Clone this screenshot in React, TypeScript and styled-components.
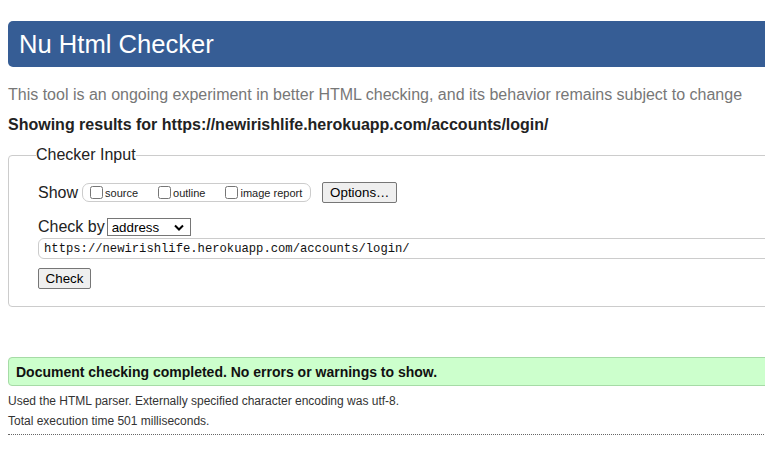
import React from "react";
import styled, { createGlobalStyle } from "styled-components";

const GlobalStyle = createGlobalStyle`
  html, body {
    margin: 0;
    padding: 0;
    background: #fff;
    overflow: hidden;
  }
  body {
    font-family: "Liberation Sans", Arial, sans-serif;
    color: #222;
  }
`;

const Page = styled.div`
  width: 900px;
  padding: 21px 0 0 8px;
  box-sizing: border-box;
`;

const Header = styled.h1`
  margin: 0;
  height: 46px;
  padding-left: 11px;
  background: #365d95;
  color: #fff;
  font-size: 25.6px;
  font-weight: 400;
  line-height: 46px;
  border-radius: 5px;
`;

const Intro = styled.p`
  margin: 19px 0 0;
  font-size: 16px;
  line-height: 18px;
  color: #777;
`;

const Results = styled.p`
  margin: 12px 0 0;
  font-size: 16px;
  line-height: 18px;
  font-weight: 700;
  color: #222;
`;

const Fieldset = styled.fieldset`
  margin: 12px 0 0;
  padding: 18px 0 17px 29px;
  border: 1px solid #ccc;
  border-radius: 4px;
  min-width: 0;
`;

const Legend = styled.legend`
  margin-left: -2px;
  padding: 0;
  font-size: 16px;
  line-height: 18px;
  color: #222;
`;

const Row = styled.div<{ $gap?: number }>`
  display: flex;
  align-items: center;
  margin-top: ${({ $gap }) => $gap ?? 0}px;
`;

const Label = styled.span`
  font-size: 16px;
  line-height: 20px;
  color: #222;
  margin-right: 4px;
`;

const OptionGroup = styled.div`
  display: flex;
  align-items: center;
  gap: 20px;
  height: 19px;
  padding: 0 8px 0 7px;
  border: 1px solid #ccc;
  border-radius: 7px;
  box-sizing: border-box;
`;

const CheckItem = styled.label`
  display: flex;
  align-items: center;
  font-size: 11px;
  color: #222;
`;

const Box = styled.input`
  width: 13px;
  height: 13px;
  margin: 0 2px 0 0;
`;

const Button = styled.button<{ $width: number }>`
  width: ${({ $width }) => $width}px;
  height: 21px;
  padding: 0;
  font-family: "Liberation Sans", Arial, sans-serif;
  font-size: 13.33px;
  color: #000;
  background: #efefef;
  border: 1px solid #767676;
  border-radius: 2px;
  box-sizing: border-box;
`;

const Select = styled.select`
  appearance: none;
  -webkit-appearance: none;
  width: 84px;
  height: 18px;
  padding: 0 0 0 4px;
  font-family: "Liberation Sans", Arial, sans-serif;
  font-size: 13.33px;
  color: #000;
  background-color: #fff;
  border: 1px solid #767676;
  border-radius: 0;
  box-sizing: border-box;
  background-image: url("data:image/svg+xml;charset=UTF-8,<svg width='10' height='7' viewBox='0 0 10 7' xmlns='http://www.w3.org/2000/svg'><path fill='none' stroke='%23000' stroke-width='2' d='M1 1.5l4 4 4-4'/></svg>");
  background-repeat: no-repeat;
  background-position: right 6px center;
  background-size: 10px 7px;
`;

const UrlInput = styled.input`
  display: block;
  width: 100%;
  height: 21px;
  margin-top: 1px;
  padding: 0 0 0 5px;
  font-family: "Liberation Mono", "DejaVu Sans Mono", monospace;
  font-size: 12.2px;
  color: #111;
  border: 1px solid #ccc;
  border-radius: 6px;
  box-sizing: border-box;
  outline: none;
`;

const Success = styled.div`
  margin-top: 50px;
  height: 29px;
  padding-left: 7px;
  display: flex;
  align-items: center;
  background: #ccffcc;
  border: 1px solid #a6dba6;
  border-radius: 4px;
  box-sizing: border-box;
  font-size: 14px;
  font-weight: 700;
  color: #111;
`;

const Detail = styled.p<{ $top: number }>`
  margin: ${({ $top }) => $top}px 0 0;
  font-size: 12px;
  line-height: 14px;
  color: #333;
`;

const Rule = styled.hr`
  margin: 6px 0 0;
  border: 0;
  border-top: 1px dotted #666;
`;

export default function App() {
  return (
    <>
      <GlobalStyle />
      <Page>
        <Header>Nu Html Checker</Header>
        <Intro>
          This tool is an ongoing experiment in better HTML checking, and its behavior remains
          subject to change
        </Intro>
        <Results>Showing results for https://newirishlife.herokuapp.com/accounts/login/</Results>
        <Fieldset>
          <Legend>Checker Input</Legend>
          <Row>
            <Label>Show</Label>
            <OptionGroup>
              <CheckItem>
                <Box type="checkbox" />
                source
              </CheckItem>
              <CheckItem>
                <Box type="checkbox" />
                outline
              </CheckItem>
              <CheckItem>
                <Box type="checkbox" />
                image report
              </CheckItem>
            </OptionGroup>
            <Button $width={75} style={{ marginLeft: 11 }}>
              Options…
            </Button>
          </Row>
          <Row $gap={14}>
            <Label style={{ marginRight: 2 }}>Check by</Label>
            <Select defaultValue="address">
              <option value="address">address</option>
              <option value="upload">file upload</option>
              <option value="text">text input</option>
            </Select>
          </Row>
          <UrlInput readOnly value="https://newirishlife.herokuapp.com/accounts/login/" />
          <Row $gap={9}>
            <Button $width={53}>Check</Button>
          </Row>
        </Fieldset>
        <Success>Document checking completed. No errors or warnings to show.</Success>
        <Detail $top={8}>Used the HTML parser. Externally specified character encoding was utf-8.</Detail>
        <Detail $top={6}>Total execution time 501 milliseconds.</Detail>
        <Rule />
      </Page>
    </>
  );
}
